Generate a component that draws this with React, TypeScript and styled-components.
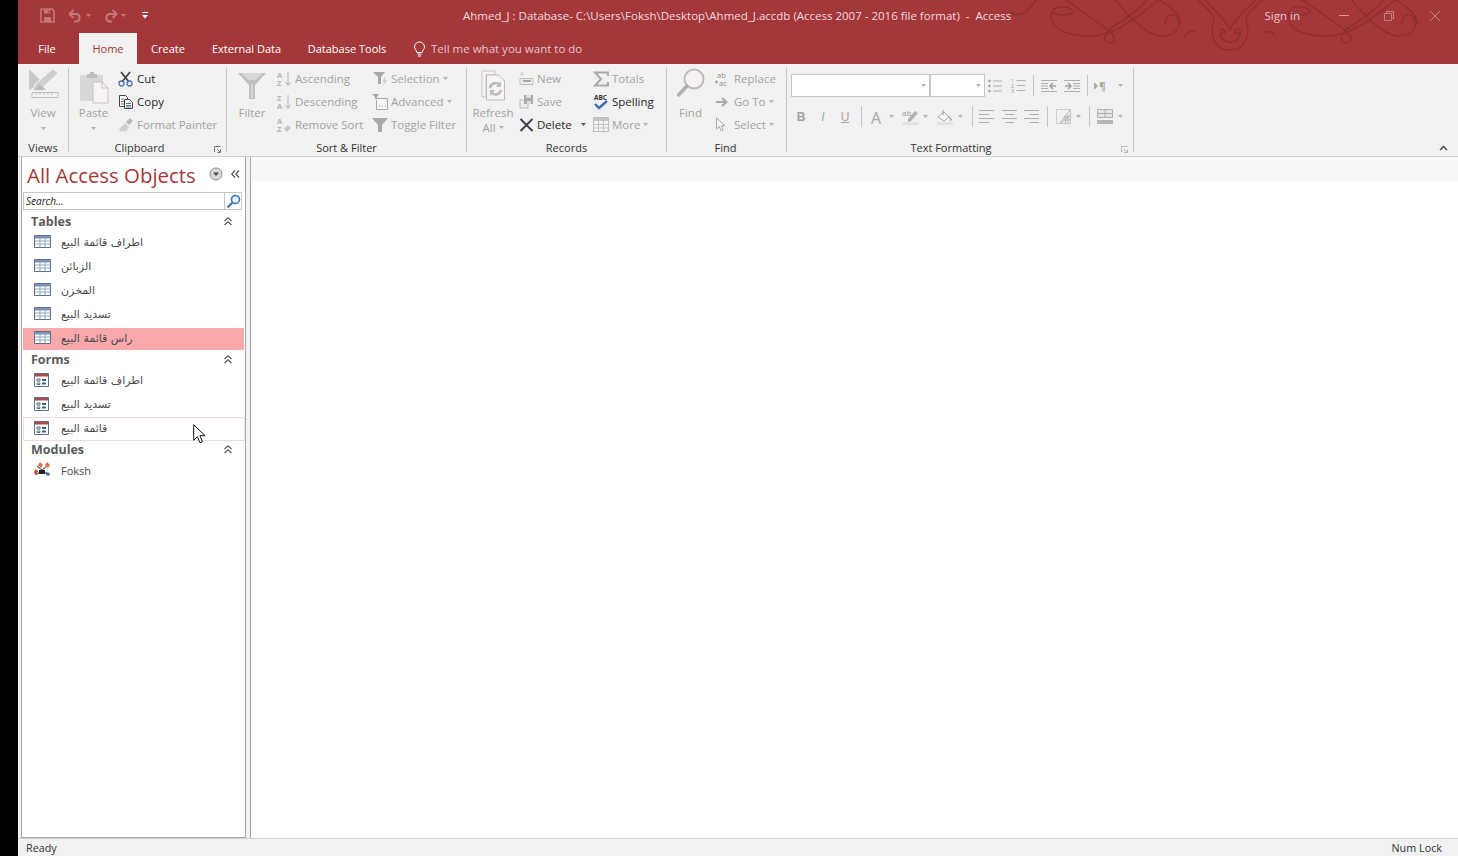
// App.tsx
import React from 'react';
import styled, { createGlobalStyle } from 'styled-components';

const FONT = `"Open Sans", "Noto Sans", "DejaVu Sans", sans-serif`;
const RED = '#a4373a';
const OFF = '#a3a3a3';
const ICON = '#b4b4b4';

const GlobalStyle = createGlobalStyle`
  html, body { margin: 0; padding: 0; height: 100%; background: #000; overflow: hidden; }
  #root { height: 100%; }
`;

/* ---------- drawn icons ---------- */

type IconProps = { w?: number; h?: number };

const IconSvg = styled.svg`
  display: block;
  flex: none;
  overflow: visible;
`;

const Svg: React.FC<IconProps & { children: React.ReactNode }> = ({ w = 16, h = 16, children }) => (
  <IconSvg width={w} height={h} viewBox={`0 0 ${w} ${h}`}>
    {children}
  </IconSvg>
);

const SaveIcon = () => (
  <Svg w={15} h={15}>
    <path d="M1 1h11l2 2v11H1z" fill="none" stroke="#c57577" strokeWidth="1.6" />
    <path d="M4 1.5h6v4H4zM4 9h7v5H4z" fill="#c57577" />
    <path d="M8 2.5h1v2H8z" fill={RED} />
  </Svg>
);
const UndoIcon = () => (
  <Svg w={15} h={13}>
    <path d="M5.5 1 1.5 5l4 4M2 5h7a4 4 0 0 1 0 7.5H6" fill="none" stroke="#c57577" strokeWidth="2" />
  </Svg>
);
const RedoIcon = () => (
  <Svg w={15} h={13}>
    <path d="M9.5 1l4 4-4 4M13 5H6a4 4 0 0 0 0 7.5h3" fill="none" stroke="#c57577" strokeWidth="2" />
  </Svg>
);
const TinyCaret: React.FC<{ c?: string }> = ({ c = '#c57577' }) => (
  <Svg w={5} h={3}>
    <path d="M0 0h5L2.5 3z" fill={c} />
  </Svg>
);
const CustomizeIcon = () => (
  <Svg w={6} h={7}>
    <path d="M0 0h6v1H0zM0 3h6L3 6.5z" fill="#fff" />
  </Svg>
);
const BulbIcon = () => (
  <Svg w={13} h={16}>
    <path d="M6.5 1a5 5 0 0 1 5 5c0 2.2-2 3-2.4 5.5H3.9C3.500 9 1.500 8.200 1.500 6a5 5 0 0 1 5-5z" fill="none" stroke="#fff" />
    <path d="M4.500 13h4M5 15h3" stroke="#fff" />
  </Svg>
);
const ViewIcon = () => (
  <Svg w={31} h={32}>
    <path d="M1 1l14 14L1 22z" fill="#c8c8c8" />
    <path d="M7 16 25 1l5 4-18 17-7 1z" fill="#cfcfcf" stroke="#f1f1f1" />
    <path d="M12 16l6 6H6z" fill="#bdbdbd" />
    <path d="M4 24.500h26v5H4z" fill="#f3f3f3" stroke="#bdbdbd" />
    <path d="M8 25v2M12 25v2M16 25v2M20 25v2M24 25v2" stroke="#bdbdbd" />
  </Svg>
);
const PasteIcon = () => (
  <Svg w={30} h={33}>
    <path d="M1 4h23v26H1z" fill="#d8d8d8" />
    <path d="M8 3h3V1h4v2h3v4H8z" fill="#bcbcbc" />
    <path d="M14 11h9l6 6v15H14z" fill="#f6f2f6" stroke="#c4c4c4" />
    <path d="M23 11v6h6" fill="none" stroke="#c4c4c4" />
  </Svg>
);
const CutIcon = () => (
  <Svg>
    <path d="M3 1l8 10M12 1 4 11" stroke="#3f3f3f" strokeWidth="1.7" fill="none" />
    <circle cx="3.500" cy="12.500" r="2.500" fill="none" stroke="#4a75b0" strokeWidth="1.300" />
    <circle cx="11.500" cy="12.500" r="2.500" fill="none" stroke="#4a75b0" strokeWidth="1.300" />
  </Svg>
);
const CopyIcon = () => (
  <Svg>
    <path d="M1.500 1.500h6l2 2v9h-8z" fill="#fff" stroke="#444" />
    <path d="M6.500 5.500h5l3 3v6h-8z" fill="#fff" stroke="#444" />
    <path d="M3 5h3M3 7.500h3M3 10h3" stroke="#777" />
    <path d="M8 9.500h5M8 11.500h5M8 13h5" stroke="#4a75b0" />
  </Svg>
);
const PainterIcon = () => (
  <Svg>
    <path d="M1 12 7 6l4 4-3 5-3-1-2 1z" fill="#d0d0d0" />
    <path d="M8 5l4-4 3 3-4 4z" fill="#b7b7b7" />
  </Svg>
);
const FilterBigIcon = () => (
  <Svg w={28} h={28}>
    <path d="M0 1h28L17 13v14h-6V13z" fill="#c0c0c0" />
    <path d="M3 1h22l-7 7H10z" fill="#d8d8d8" />
    <path d="M13 12h2v14h-2z" fill="#d8d8d8" />
  </Svg>
);
const IconLetters = styled.text`
  font-family: ${FONT};
  font-size: 7.5px;
  font-weight: 700;
  fill: ${ICON};
`;
const SortIcon: React.FC<{ top: string; bottom: string }> = ({ top, bottom }) => (
  <Svg w={15} h={16}>
    <IconLetters>
      <tspan x="0" y="7">{top}</tspan>
      <tspan x="0" y="15">{bottom}</tspan>
    </IconLetters>
    <path d="M11 1v13M8.500 11l2.500 3.500 2.500-3.500" fill="none" stroke={ICON} />
  </Svg>
);
const RemoveSortIcon = () => (
  <Svg w={15} h={16}>
    <IconLetters>
      <tspan x="0" y="7">A</tspan>
      <tspan x="0" y="15">Z</tspan>
    </IconLetters>
    <path d="M7 12l4-4 3 3-4 4z" fill="#c9c9c9" />
  </Svg>
);
const SelectionIcon = () => (
  <Svg>
    <path d="M1 1h12L9 6v7H6V6z" fill="#a9a9a9" />
    <path d="M13 6l-3 5h2l-1 4 4-6h-2l1-3z" fill="#d2d2d2" />
  </Svg>
);
const AdvancedIcon = () => (
  <Svg>
    <path d="M0 0h7L5 3v2H3V3z" fill="#a9a9a9" />
    <path d="M4 4.500h11.500v11H4.500V6" fill="#f7f7f7" stroke="#a9a9a9" />
    <path d="M7 12h1M10 12h1M13 12h1" stroke="#888" />
  </Svg>
);
const ToggleIcon = () => (
  <Svg>
    <path d="M0 1h16l-6 7v7H6V8z" fill="#aaa" />
  </Svg>
);
const RefreshIcon = () => (
  <Svg w={25} h={31}>
    <path d="M1 1h13v4h-9v22H1z" fill="#f3f3f3" stroke="#c8c8c8" />
    <path d="M5.500 5h12l6 6v19h-18z" fill="#f7f3f7" stroke="#bcbcbc" />
    <path d="M9 18a5.500 5.500 0 0 1 10-2.500M20 20a5.500 5.500 0 0 1-10 2" fill="none" stroke="#bcbcbc" strokeWidth="2.500" />
    <path d="M20 11v6h-5zM9 26v-6h5z" fill="#bcbcbc" />
  </Svg>
);
const NewIcon = () => (
  <Svg w={15} h={14}>
    <path d="M3 0v4M1 2h4" stroke="#cfcfcf" />
    <path d="M1 6.500h13v6H1z" fill="#eee" stroke="#bdbdbd" />
    <path d="M4 9h8" stroke="#aaa" strokeWidth="2" />
  </Svg>
);
const RecordSaveIcon = () => (
  <Svg w={15} h={15}>
    <path d="M1 6h8v8H1z" fill="#eee" stroke="#bdbdbd" />
    <path d="M5 1h9v9H5z" fill="#aaa" />
    <path d="M7 1h5v3H7zM8 7h4v3H8z" fill="#ddd" />
  </Svg>
);
const DeleteIcon = () => (
  <Svg w={15} h={14}>
    <path d="M1.500 1 13.500 13M13.500 1 1.500 13" stroke="#3f3f46" strokeWidth="2" />
  </Svg>
);
const SigmaIcon = () => (
  <Svg>
    <path d="M15 5V1.500H2l6 6.500-6 6.500h13V11" fill="none" stroke="#a9a9a9" strokeWidth="2" />
  </Svg>
);
const SpellLetters = styled.text`
  font-family: ${FONT};
  font-size: 6.5px;
  font-weight: 700;
  fill: #333;
`;
const SpellIcon = () => (
  <Svg w={15} h={16}>
    <SpellLetters x="1" y="6">ABC</SpellLetters>
    <path d="M2 10l4 4 8-7" fill="none" stroke="#3f6fb0" strokeWidth="2.400" />
  </Svg>
);
const MoreIcon = () => (
  <Svg w={16} h={15}>
    <path d="M.5.500h15v14H.5z" fill="#f4f4f4" stroke="#bdbdbd" />
    <path d="M1 1h14v3H1z" fill="#c4c4c4" />
    <path d="M5.500 4v10M10.500 4v10M1 7.500h14M1 11h14" stroke="#c4c4c4" />
  </Svg>
);
const FindBigIcon = () => (
  <Svg w={29} h={30}>
    <circle cx="18" cy="11" r="9.500" fill="#f5f1f5" stroke="#bdbdbd" strokeWidth="2" />
    <path d="M11 18 2.500 27" stroke="#b0b0b0" strokeWidth="3.500" strokeLinecap="round" />
  </Svg>
);
const ReplaceLetters = styled.text`
  font-family: ${FONT};
  font-size: 7.500px;
  fill: #8f8f8f;
`;
const ReplaceIcon = () => (
  <Svg>
    <ReplaceLetters>
      <tspan x="2" y="6.500">ab</tspan>
      <tspan x="4" y="15">ac</tspan>
    </ReplaceLetters>
    <path d="M0 11h3M1.500 9.500v3" stroke="#9a9a9a" />
  </Svg>
);
const GoToIcon = () => (
  <Svg w={14} h={12}>
    <path d="M1 6h10M7 2l4.500 4L7 10" fill="none" stroke="#a9a9a9" strokeWidth="2" />
  </Svg>
);
const SelectIcon = () => (
  <Svg w={12} h={16}>
    <path d="M1.500 1v11l2.700-2.500 2 4.500 2-1-2-4.300h3.800z" fill="#f7f7f7" stroke="#a9a9a9" />
  </Svg>
);
const Lines: React.FC<{ rows: [number, number][] }> = ({ rows }) => (
  <Svg w={16} h={13}>
    {rows.map(([x1, x2], i) => (
      <path key={i} d={`M${x1} ${i * 4 + 0.5}H${x2}`} stroke="#b0b0b0" />
    ))}
  </Svg>
);
const BulletsIcon = () => (
  <Svg w={14} h={14}>
    <path d="M5 2h9M5 7h9M5 12h9" stroke="#b0b0b0" />
    <circle cx="1.500" cy="2" r="1.300" fill="#a5a5a5" />
    <circle cx="1.500" cy="7" r="1.300" fill="#a5a5a5" />
    <circle cx="1.500" cy="12" r="1.300" fill="#a5a5a5" />
  </Svg>
);
const NumberLetters = styled.text`
  font-family: ${FONT};
  font-size: 5px;
  fill: #999;
`;
const NumbersIcon = () => (
  <Svg w={15} h={15}>
    <path d="M5.500 2.500h9M5.500 7.500h9M5.500 12.500h9" stroke="#b0b0b0" />
    <NumberLetters>
      <tspan x="0" y="5">1</tspan>
      <tspan x="0" y="10">2</tspan>
      <tspan x="0" y="15">3</tspan>
    </NumberLetters>
  </Svg>
);
const IndentIcon: React.FC<{ flip?: boolean }> = ({ flip }) => (
  <Svg w={16} h={12}>
    <g transform={flip ? 'matrix(-1 0 0 1 16 0)' : undefined}>
      <path d="M0 .5h16M0 11.500h16M0 3.500h7M0 6h7M0 8.500h7" stroke="#b0b0b0" />
      <path d="M9 6h6M12 3 9 6l3 3" fill="none" stroke="#a0a0a0" strokeWidth="1.500" />
    </g>
  </Svg>
);
const PilcrowLetter = styled.text`
  font-family: ${FONT};
  font-size: 10px;
  font-weight: 700;
  fill: #a9a9a9;
`;
const PilcrowIcon = () => (
  <Svg w={14} h={10}>
    <path d="M0 1l4 4-4 4z" fill="#a9a9a9" />
    <PilcrowLetter x="5" y="9">¶</PilcrowLetter>
  </Svg>
);
const FontColorLetter = styled.text`
  font-family: ${FONT};
  font-size: 16px;
  fill: #a9a9a9;
`;
const FontColorIcon = () => (
  <Svg w={14} h={14}>
    <FontColorLetter x="1" y="14">A</FontColorLetter>
  </Svg>
);
const HighlightLetters = styled.text`
  font-family: ${FONT};
  font-size: 8px;
  fill: #999;
`;
const HighlightIcon = () => (
  <Svg w={16} h={16}>
    <HighlightLetters x="0" y="7">ab</HighlightLetters>
    <path d="M6 10 13 2l3 2-7 8-3 1z" fill="#b0b0b0" />
    <path d="M0 13h16v3H0z" fill="#e2e2e2" />
  </Svg>
);
const FillIcon = () => (
  <Svg w={16} h={16}>
    <path d="M1 8l6-5 5 5-5 4z" fill="#f7f7f7" stroke="#a9a9a9" />
    <path d="M6 1v5" stroke="#a9a9a9" />
    <path d="M12 7c2 1 3 3 3 4l-2 1z" fill="#a9a9a9" />
    <path d="M0 13h16v3H0z" fill="#e2e2e2" />
  </Svg>
);
const AlignIcon: React.FC<{ side: 'l' | 'c' | 'r' }> = ({ side }) => {
  const short: [number, number] = side === 'l' ? [0, 10] : side === 'c' ? [3, 12] : [5, 15];
  return <Lines rows={[[0, 15], short, [0, 15], short]} />;
};
const GridLinesIcon = () => (
  <Svg w={15} h={15}>
    <path d="M.5.500h14v14H.5z" fill="none" stroke="#a9a9a9" strokeDasharray="1 1" />
    <path d="M5 14.500 14.500 5M8 8h6.500M8 11h6.500M9.500 8v6.500M12 6v8.500M4 14l10-13" fill="none" stroke="#b4b4b4" />
  </Svg>
);
const AltRowIcon = () => (
  <Svg w={16} h={15}>
    <path d="M.5.500h15v8H.5z" fill="#e4e4e4" stroke="#b0b0b0" />
    <path d="M1 4.500h14M8 1v7" stroke="#b0b0b0" />
    <path d="M0 11h16v4H0z" fill="#b7b7b7" />
  </Svg>
);
const LauncherIcon: React.FC<{ c: string }> = ({ c }) => (
  <Svg w={7} h={7}>
    <path d="M.5 6V.5H6.500" fill="none" stroke={c} />
    <path d="M3 3l3 3M6.500 3.500v3h-3" fill="none" stroke={c} />
  </Svg>
);
const CollapseRibbonIcon = () => (
  <Svg w={9} h={6}>
    <path d="M1 5l3.500-3.500L8 5" fill="none" stroke="#444" strokeWidth="1.400" />
  </Svg>
);
const NavMenuIcon = () => (
  <Svg w={14} h={14}>
    <circle cx="7" cy="7" r="6" fill="#d9d9d9" stroke="#8b8b8b" />
    <path d="M4 5.500h6L7 9z" fill="#444" />
  </Svg>
);
const DoubleLeftIcon = () => (
  <Svg w={9} h={8}>
    <path d="M4 .5.800 4 4 7.500M8 .5 4.800 4 8 7.500" fill="none" stroke="#555" strokeWidth="1.200" />
  </Svg>
);
const DoubleUpIcon = () => (
  <Svg w={8} h={9}>
    <path d="M.5 4 4 .8 7.500 4M.5 8 4 4.800 7.500 8" fill="none" stroke="#555" strokeWidth="1.200" />
  </Svg>
);
const SearchGlassIcon = () => (
  <Svg w={15} h={15}>
    <circle cx="9.500" cy="5.500" r="4" fill="#e8f0fa" stroke="#3f73b5" strokeWidth="1.600" />
    <path d="M6.500 8.500 1.500 13.500" stroke="#3f73b5" strokeWidth="2.200" />
  </Svg>
);
const TableIcon = () => (
  <Svg w={17} h={13}>
    <path d="M.5.500h16v12H.5z" fill="#fff" stroke="#5c6f8c" />
    <path d="M1 1h15v2.500H1z" fill="#7e93b5" />
    <path d="M6 3v9M11 3v9M1 6h15M1 9h15" stroke="#8fa3c2" />
  </Svg>
);
const FormIcon = () => (
  <Svg w={15} h={14}>
    <path d="M.5.500h14v13H.5z" fill="#fff" stroke="#5c6f8c" />
    <path d="M1 1h13v2.500H1z" fill="#b04a50" />
    <path d="M3 6h3v2H3zM3 10h3v1.500H3z" fill="none" stroke="#5c6f8c" />
    <path d="M8 7h4M8 10.500h4" stroke="#3f5f90" strokeWidth="2" />
  </Svg>
);
const ModuleIcon = () => (
  <Svg w={17} h={15}>
    <path d="M3 4l11 9M13 4 2 13" stroke="#777" strokeWidth="1.400" />
    <path d="M6 0l3 3-2 3-3-3zM13 0l3 3-2 3-3-3z" fill="#e0704e" />
    <path d="M1 7l3 2-2 4-2-2z" fill="#c8402f" />
    <path d="M5 8h6v4H5z" fill="#222" />
    <path d="M12 10l4 1-1 3-3-1z" fill="#3f6fb0" />
  </Svg>
);
const MouseCursor = () => (
  <Svg w={13} h={20}>
    <path d="M.7.700v15.500l3.700-3.500 2.600 6 2.500-1-2.600-6h5.200z" fill="#fff" stroke="#111" />
  </Svg>
);

const OrnamentHalf = () => (
  <>
    <path d="M220 35C210 15 160 15 155 40 145 90 210 110 280 108 350 105 440 30 480 -5" />
    <path d="M222 33C210 50 170 47 158 36" />
    <path d="M190 -5C240 30 300 70 330 95 355 120 340 130 325 128 305 125 315 95 340 80 390 50 440 10 440 -5" />
    <path d="M340 -5C380 40 430 100 480 108 530 112 550 70 530 50 510 35 485 60 500 75" />
    <path d="M470 -5C500 15 545 40 540 72" />
  </>
);

const Ornament = () => (
  <svg width="458" height="70" viewBox="0 0 1374 210" fill="none" stroke="#8d2e31" strokeWidth="4">
    <path d="M30 35C60 60 90 30 110 -5" />
    <OrnamentHalf />
    <g transform="translate(710 0)"><OrnamentHalf /></g>
    <path d="M690 150C640 150 630 100 640 70 650 40 610 20 590 -5M690 150C740 150 750 100 740 70 730 40 770 20 790 -5" />
    <path d="M660 100C660 135 720 135 720 100M660 100c-5-15 15-15 15-5 0 8-10 8-12 3M720 100c5-15-15-15-15-5 0 8 10 8 12 3" />
    <path d="M610 -5C640 30 680 60 690 90M770 -5C740 30 700 60 690 90" />
    <path d="M555 112c3-20 30-20 32-14M825 112c-3-20-30-20-32-14" />
  </svg>
);

/* ---------- window ---------- */

const Desktop = styled.div`
  height: 100vh;
  display: flex;
  background: #000;
`;

const AccessWindow = styled.div`
  flex: 1;
  margin-left: 18px;
  display: flex;
  flex-direction: column;
  background: #fff;
  font-family: ${FONT};
  min-width: 0;
`;

const TitleBar = styled.header`
  position: relative;
  height: 64px;
  flex: none;
  background: ${RED};
  overflow: hidden;
`;

const OrnamentLayer = styled.div`
  position: absolute;
  right: 0;
  top: 0;
`;

const CaptionRow = styled.div`
  position: relative;
  height: 33px;
  box-sizing: border-box;
  padding-bottom: 2px;
  display: grid;
  grid-template-columns: 445px 1fr auto;
  align-items: center;
`;

const Qat = styled.div`
  display: flex;
  align-items: center;
  padding-left: 22px;
`;

const QatSlot = styled.span<{ $gap: number }>`
  display: flex;
  align-items: center;
  gap: 3px;
  margin-right: ${(p) => p.$gap}px;
`;

const WindowTitle = styled.div`
  font-size: 11.500px;
  color: #f1dcdc;
  white-space: pre;
`;

const WindowControls = styled.div`
  display: flex;
  align-items: center;
  padding-right: 18px;
`;

const SignIn = styled.span`
  font-size: 11.500px;
  color: #e6c6c7;
  margin-right: 39px;
`;

const CtlIcon = styled.span<{ $gap?: number }>`
  display: block;
  margin-right: ${(p) => p.$gap || 0}px;
`;

const TabRow = styled.nav`
  position: relative;
  height: 31px;
  display: flex;
  align-items: stretch;
`;

const Tab = styled.div<{ $active?: boolean; $w: number; $ml?: number }>`
  width: ${(p) => p.$w}px;
  margin-left: ${(p) => p.$ml || 0}px;
  display: flex;
  align-items: center;
  justify-content: center;
  font-size: 11px;
  color: ${(p) => (p.$active ? RED : '#fff')};
  background: ${(p) => (p.$active ? '#f1f1f1' : 'transparent')};
`;

const TellMe = styled.div`
  display: flex;
  align-items: center;
  gap: 5px;
  margin-left: 13px;
  font-size: 11.500px;
  color: #e6c6c7;
`;

/* ---------- ribbon ---------- */

const Ribbon = styled.section`
  position: relative;
  height: 93px;
  flex: none;
  display: flex;
  background: #f1f1f1;
  border-bottom: 1px solid #d0d0d0;
  box-sizing: border-box;
  padding-top: 4px;
`;

const Group = styled.div<{ $w: number }>`
  position: relative;
  width: ${(p) => p.$w}px;
  flex: none;
  box-sizing: border-box;
  height: 84px;
  border-right: 1px solid #c6c6c6;
  display: flex;
  flex-direction: column;
`;

const GroupBody = styled.div`
  flex: 1;
  display: flex;
  min-height: 0;
`;

const GroupLabel = styled.div<{ $pr?: number }>`
  height: 15px;
  line-height: 15px;
  margin-bottom: -3px;
  padding-right: ${(p) => p.$pr || 0}px;
  text-align: center;
  font-size: 11px;
  color: #333;
`;

const Launcher = styled.span`
  position: absolute;
  right: 5px;
  bottom: -1px;
`;

const BigButton = styled.div<{ $w: number; $ml?: number }>`
  width: ${(p) => p.$w}px;
  margin-left: ${(p) => p.$ml || 0}px;
  display: flex;
  flex-direction: column;
  align-items: center;
  flex: none;
`;

const BigIcon = styled.div<{ $h: number }>`
  height: ${(p) => p.$h}px;
  display: flex;
  align-items: flex-end;
`;

const BigLabel = styled.div<{ $mt?: number; $lh?: number }>`
  margin-top: ${(p) => p.$mt || 0}px;
  font-size: 11.500px;
  line-height: ${(p) => p.$lh || 16}px;
  color: ${OFF};
  display: flex;
  align-items: center;
  gap: 3px;
`;

const BigCaret = styled.div`
  margin-top: 6px;
`;

const SmallColumn = styled.div<{ $w: number; $ml?: number }>`
  width: ${(p) => p.$w}px;
  flex: none;
  margin-left: ${(p) => p.$ml || 0}px;
  margin-top: -1px;
  display: flex;
  flex-direction: column;
`;

const SmallButton = styled.div<{ $on?: boolean }>`
  height: 23px;
  display: flex;
  align-items: center;
  font-size: 11.500px;
  color: ${(p) => (p.$on ? '#262626' : OFF)};
  white-space: nowrap;
`;

const SmallIconBox = styled.span<{ $w: number }>`
  width: ${(p) => p.$w}px;
  flex: none;
  display: flex;
  align-items: center;
`;

const SmallCaret = styled.span<{ $ml?: number }>`
  margin-left: ${(p) => p.$ml ?? 3}px;
`;

const FormatGrid = styled.div`
  display: flex;
  flex-direction: column;
  padding-left: 4px;
`;

const FormatRow = styled.div<{ $h: number }>`
  height: ${(p) => p.$h}px;
  display: flex;
  align-items: center;
`;

const ComboBox = styled.div<{ $w: number }>`
  width: ${(p) => p.$w}px;
  height: 23px;
  box-sizing: border-box;
  flex: none;
  background: #fff;
  border: 1px solid #c6c6c6;
  display: flex;
  align-items: center;
  justify-content: flex-end;
  padding-right: 3px;
`;

const FmtCell = styled.span<{ $w: number }>`
  width: ${(p) => p.$w}px;
  flex: none;
  display: flex;
  align-items: center;
  justify-content: center;
  gap: 5px;
`;

const FmtLetter = styled.span<{ $i?: boolean; $u?: boolean; $b?: boolean }>`
  font-family: "Liberation Sans", sans-serif;
  font-size: 12px;
  color: #a3a3a3;
  font-weight: ${(p) => (p.$b ? 700 : 400)};
  font-style: ${(p) => (p.$i ? 'italic' : 'normal')};
  text-decoration: ${(p) => (p.$u ? 'underline' : 'none')};
`;

const FmtSep = styled.span<{ $ml?: number }>`
  width: 1px;
  height: 21px;
  margin-left: ${(p) => p.$ml || 0}px;
  background: #c6c6c6;
  flex: none;
`;

const RibbonCollapse = styled.span`
  position: absolute;
  right: 10px;
  bottom: 5px;
`;

/* ---------- body ---------- */

const Workspace = styled.main`
  flex: 1;
  display: flex;
  min-height: 0;
  background: #f1f1f1;
`;

const NavPane = styled.aside`
  position: relative;
  width: 224px;
  margin-left: 3px;
  box-sizing: border-box;
  flex: none;
  background: #fff;
  border-left: 1px solid #a9a9a9;
  border-bottom: 1px solid #a9a9a9;
  display: flex;
  flex-direction: column;
`;

const NavHeader = styled.div`
  height: 35px;
  flex: none;
  display: flex;
  align-items: center;
  padding-left: 5px;
`;

const NavTitle = styled.div`
  flex: none;
  font-size: 20.400px;
  font-weight: 400;
  color: ${RED};
  width: 182px;
  white-space: nowrap;
`;

const NavHeaderBtn = styled.span<{ $w: number }>`
  flex: none;
  width: ${(p) => p.$w}px;
  margin-top: -2px;
  display: flex;
  justify-content: center;
`;

const SearchBox = styled.div`
  height: 18px;
  margin: 0 3px 2px 1px;
  box-sizing: border-box;
  flex: none;
  border: 1px solid #c6c6c6;
  display: flex;
  align-items: center;
`;

const SearchText = styled.span`
  flex: 1;
  padding-left: 2px;
  font-size: 10px;
  font-style: italic;
  color: #222;
`;

const SearchBtn = styled.span`
  width: 17px;
  height: 100%;
  box-sizing: border-box;
  border-left: 1px solid #c6c6c6;
  display: flex;
  align-items: center;
  justify-content: center;
`;

const SectionHead = styled.div<{ $mt?: number }>`
  height: 20px;
  margin-top: ${(p) => p.$mt || 0}px;
  box-sizing: border-box;
  flex: none;
  display: flex;
  align-items: center;
  justify-content: space-between;
  padding: 0 13px 1px 9px;
  font-size: 12.500px;
  font-weight: 700;
  color: #5a5a5a;
`;

const ItemList = styled.div`
  display: flex;
  flex-direction: column;
  flex: none;
  gap: 2px;
`;

const ItemRow = styled.div<{ $state?: 'selected' | 'hover' }>`
  height: ${(p) => (p.$state === 'hover' ? 24 : 22)}px;
  margin: ${(p) => (p.$state === 'hover' ? '-1px 0 0 1px' : '0 1px 0 1px')};
  box-sizing: border-box;
  flex: none;
  display: flex;
  align-items: center;
  padding-left: ${(p) => (p.$state === 'hover' ? 10 : 11)}px;
  background: ${(p) => (p.$state === 'selected' ? '#f9a8ab' : '#fff')};
  border: ${(p) => (p.$state === 'hover' ? '1px solid #f5d9db' : 'none')};
`;

const ItemIcon = styled.span`
  width: 27px;
  flex: none;
  display: flex;
  margin-top: -3px;
`;

const ItemText = styled.span<{ $latin?: boolean }>`
  font-family: ${(p) => (p.$latin ? FONT : `"DejaVu Sans", sans-serif`)};
  font-size: 11px;
  margin-top: -1px;
  color: #4a4a4a;
`;

const Cursor = styled.span`
  position: absolute;
  left: 171px;
  top: 267px;
`;

const Splitter = styled.div`
  width: 4px;
  flex: none;
  background: #f1f1f1;
  border-left: 1px solid #a9a9a9;
  border-right: 1px solid #a9a9a9;
`;

const Canvas = styled.div`
  flex: 1;
  display: flex;
  flex-direction: column;
  background: #fff;
`;

const CanvasStrip = styled.div`
  height: 24px;
  background: #f8f8f8;
`;

const StatusBar = styled.footer`
  height: 18px;
  flex: none;
  box-sizing: border-box;
  display: flex;
  align-items: center;
  justify-content: space-between;
  padding: 0 16px 0 8px;
  background: #f1f1f1;
  border-top: 1px solid #d0d0d0;
  font-size: 10.800px;
  color: #333;
`;

/* ---------- data ---------- */

const TABLES = ['اطراف قائمة البيع', 'الزبائن', 'المخزن', 'تسديد البيع', 'راس قائمة البيع'];
const FORMS = ['اطراف قائمة البيع', 'تسديد البيع', 'قائمة البيع'];

const Caret: React.FC = () => <TinyCaret c="#b5b5b5" />;

const App: React.FC = () => (
  <Desktop>
    <GlobalStyle />
    <AccessWindow>
      <TitleBar>
        <OrnamentLayer><Ornament /></OrnamentLayer>
        <CaptionRow>
          <Qat>
            <QatSlot $gap={13}><SaveIcon /></QatSlot>
            <QatSlot $gap={12}><UndoIcon /><TinyCaret /></QatSlot>
            <QatSlot $gap={16}><RedoIcon /><TinyCaret /></QatSlot>
            <QatSlot $gap={0}><CustomizeIcon /></QatSlot>
          </Qat>
          <WindowTitle>{'Ahmed_J : Database- C:\\Users\\Foksh\\Desktop\\Ahmed_J.accdb (Access 2007 - 2016 file format)  -  Access'}</WindowTitle>
          <WindowControls>
            <SignIn>Sign in</SignIn>
            <CtlIcon $gap={35}>
              <Svg w={10} h={2}><path d="M0 .5h10" stroke="#d99a9c" /></Svg>
            </CtlIcon>
            <CtlIcon $gap={36}>
              <Svg w={10} h={10}><path d="M2.500 2.500V.5h7v7h-2M.5 2.500h7v7h-7z" fill="none" stroke="#c97f81" /></Svg>
            </CtlIcon>
            <CtlIcon>
              <Svg w={10} h={10}><path d="M0 0l10 10M10 0 0 10" stroke="#c97f81" /></Svg>
            </CtlIcon>
          </WindowControls>
        </CaptionRow>
        <TabRow>
          <Tab $w={58}>File</Tab>
          <Tab $w={58} $ml={3} $active>Home</Tab>
          <Tab $w={62}>Create</Tab>
          <Tab $w={95}>External Data</Tab>
          <Tab $w={106}>Database Tools</Tab>
          <TellMe><BulbIcon />Tell me what you want to do</TellMe>
        </TabRow>
      </TitleBar>

      <Ribbon>
        <Group $w={51}>
          <GroupBody>
            <BigButton $w={50}>
              <BigIcon $h={32}><ViewIcon /></BigIcon>
              <BigLabel $mt={5}>View</BigLabel>
              <BigCaret><Caret /></BigCaret>
            </BigButton>
          </GroupBody>
          <GroupLabel>Views</GroupLabel>
        </Group>

        <Group $w={158}>
          <GroupBody>
            <BigButton $w={49}>
              <BigIcon $h={36}><PasteIcon /></BigIcon>
              <BigLabel $mt={1}>Paste</BigLabel>
              <BigCaret><Caret /></BigCaret>
            </BigButton>
            <SmallColumn $w={105}>
              <SmallButton $on><SmallIconBox $w={19}><CutIcon /></SmallIconBox>Cut</SmallButton>
              <SmallButton $on><SmallIconBox $w={19}><CopyIcon /></SmallIconBox>Copy</SmallButton>
              <SmallButton><SmallIconBox $w={19}><PainterIcon /></SmallIconBox>Format Painter</SmallButton>
            </SmallColumn>
          </GroupBody>
          <GroupLabel $pr={16}>Clipboard</GroupLabel>
          <Launcher><LauncherIcon c="#777" /></Launcher>
        </Group>

        <Group $w={240}>
          <GroupBody>
            <BigButton $w={28} $ml={11}>
              <BigIcon $h={32}><FilterBigIcon /></BigIcon>
              <BigLabel $mt={5}>Filter</BigLabel>
            </BigButton>
            <SmallColumn $w={95} $ml={11}>
              <SmallButton><SmallIconBox $w={18}><SortIcon top="A" bottom="Z" /></SmallIconBox>Ascending</SmallButton>
              <SmallButton><SmallIconBox $w={18}><SortIcon top="Z" bottom="A" /></SmallIconBox>Descending</SmallButton>
              <SmallButton><SmallIconBox $w={18}><RemoveSortIcon /></SmallIconBox>Remove Sort</SmallButton>
            </SmallColumn>
            <SmallColumn $w={90}>
              <SmallButton><SmallIconBox $w={19}><SelectionIcon /></SmallIconBox>Selection<SmallCaret><Caret /></SmallCaret></SmallButton>
              <SmallButton><SmallIconBox $w={19}><AdvancedIcon /></SmallIconBox>Advanced<SmallCaret><Caret /></SmallCaret></SmallButton>
              <SmallButton><SmallIconBox $w={19}><ToggleIcon /></SmallIconBox>Toggle Filter</SmallButton>
            </SmallColumn>
          </GroupBody>
          <GroupLabel>Sort &amp; Filter</GroupLabel>
        </Group>

        <Group $w={200}>
          <GroupBody>
            <BigButton $w={48} $ml={2}>
              <BigIcon $h={33}><RefreshIcon /></BigIcon>
              <BigLabel $mt={4} $lh={15}>Refresh</BigLabel>
              <BigLabel $lh={15}>All<Caret /></BigLabel>
            </BigButton>
            <SmallColumn $w={74} $ml={2}>
              <SmallButton><SmallIconBox $w={18}><NewIcon /></SmallIconBox>New</SmallButton>
              <SmallButton><SmallIconBox $w={18}><RecordSaveIcon /></SmallIconBox>Save</SmallButton>
              <SmallButton $on><SmallIconBox $w={18}><DeleteIcon /></SmallIconBox>Delete<SmallCaret $ml={9}><TinyCaret c="#555" /></SmallCaret></SmallButton>
            </SmallColumn>
            <SmallColumn $w={72}>
              <SmallButton><SmallIconBox $w={19}><SigmaIcon /></SmallIconBox>Totals</SmallButton>
              <SmallButton $on><SmallIconBox $w={19}><SpellIcon /></SmallIconBox>Spelling</SmallButton>
              <SmallButton><SmallIconBox $w={19}><MoreIcon /></SmallIconBox>More<SmallCaret><Caret /></SmallCaret></SmallButton>
            </SmallColumn>
          </GroupBody>
          <GroupLabel>Records</GroupLabel>
        </Group>

        <Group $w={120}>
          <GroupBody>
            <BigButton $w={29} $ml={9}>
              <BigIcon $h={30}><FindBigIcon /></BigIcon>
              <BigLabel $mt={7}>Find</BigLabel>
            </BigButton>
            <SmallColumn $w={70} $ml={10}>
              <SmallButton><SmallIconBox $w={19}><ReplaceIcon /></SmallIconBox>Replace</SmallButton>
              <SmallButton><SmallIconBox $w={19}><GoToIcon /></SmallIconBox>Go To<SmallCaret><Caret /></SmallCaret></SmallButton>
              <SmallButton><SmallIconBox $w={19}><SelectIcon /></SmallIconBox>Select<SmallCaret><Caret /></SmallCaret></SmallButton>
            </SmallColumn>
          </GroupBody>
          <GroupLabel $pr={2}>Find</GroupLabel>
        </Group>

        <Group $w={347}>
          <GroupBody>
            <FormatGrid>
              <FormatRow $h={35}>
                <ComboBox $w={139}><Caret /></ComboBox>
                <ComboBox $w={55}><Caret /></ComboBox>
                <FmtCell $w={20}><BulletsIcon /></FmtCell>
                <FmtCell $w={26}><NumbersIcon /></FmtCell>
                <FmtSep $ml={2} />
                <FmtCell $w={30}><IndentIcon /></FmtCell>
                <FmtCell $w={16}><IndentIcon flip /></FmtCell>
                <FmtSep $ml={7} />
                <FmtCell $w={41}><PilcrowIcon /><SmallCaret $ml={5}><Caret /></SmallCaret></FmtCell>
              </FormatRow>
              <FormatRow $h={27}>
                <FmtCell $w={20}><FmtLetter $b>B</FmtLetter></FmtCell>
                <FmtCell $w={24}><FmtLetter $i>I</FmtLetter></FmtCell>
                <FmtCell $w={20}><FmtLetter $u>U</FmtLetter></FmtCell>
                <FmtSep $ml={6} />
                <FmtCell $w={40}><FontColorIcon /><Caret /></FmtCell>
                <FmtCell $w={26}><HighlightIcon /><Caret /></FmtCell>
                <FmtCell $w={44}><FillIcon /><Caret /></FmtCell>
                <FmtSep />
                <FmtCell $w={28}><AlignIcon side="l" /></FmtCell>
                <FmtCell $w={18}><AlignIcon side="c" /></FmtCell>
                <FmtCell $w={26}><AlignIcon side="r" /></FmtCell>
                <FmtSep $ml={2} />
                <FmtCell $w={40}><GridLinesIcon /><Caret /></FmtCell>
                <FmtSep $ml={1} />
                <FmtCell $w={40}><AltRowIcon /><Caret /></FmtCell>
              </FormatRow>
            </FormatGrid>
          </GroupBody>
          <GroupLabel $pr={18}>Text Formatting</GroupLabel>
          <Launcher><LauncherIcon c="#b5b5b5" /></Launcher>
        </Group>
        <RibbonCollapse><CollapseRibbonIcon /></RibbonCollapse>
      </Ribbon>

      <Workspace>
        <NavPane>
          <NavHeader>
            <NavTitle>All Access Objects</NavTitle>
            <NavHeaderBtn $w={14}><NavMenuIcon /></NavHeaderBtn>
            <NavHeaderBtn $w={24}><DoubleLeftIcon /></NavHeaderBtn>
          </NavHeader>
          <SearchBox>
            <SearchText>Search...</SearchText>
            <SearchBtn><SearchGlassIcon /></SearchBtn>
          </SearchBox>
          <SectionHead>Tables<DoubleUpIcon /></SectionHead>
          <ItemList>
            {TABLES.map((name, i) => (
              <ItemRow key={name} $state={i === 4 ? 'selected' : undefined}>
                <ItemIcon><TableIcon /></ItemIcon>
                <ItemText>{name}</ItemText>
              </ItemRow>
            ))}
          </ItemList>
          <SectionHead>Forms<DoubleUpIcon /></SectionHead>
          <ItemList>
            {FORMS.map((name, i) => (
              <ItemRow key={name} $state={i === 2 ? 'hover' : undefined}>
                <ItemIcon><FormIcon /></ItemIcon>
                <ItemText>{name}</ItemText>
              </ItemRow>
            ))}
          </ItemList>
          <SectionHead $mt={-1}>Modules<DoubleUpIcon /></SectionHead>
          <ItemRow>
            <ItemIcon><ModuleIcon /></ItemIcon>
            <ItemText $latin>Foksh</ItemText>
          </ItemRow>
          <Cursor><MouseCursor /></Cursor>
        </NavPane>
        <Splitter />
        <Canvas><CanvasStrip /></Canvas>
      </Workspace>

      <StatusBar>
        <span>Ready</span>
        <span>Num Lock</span>
      </StatusBar>
    </AccessWindow>
  </Desktop>
);

export default App;
